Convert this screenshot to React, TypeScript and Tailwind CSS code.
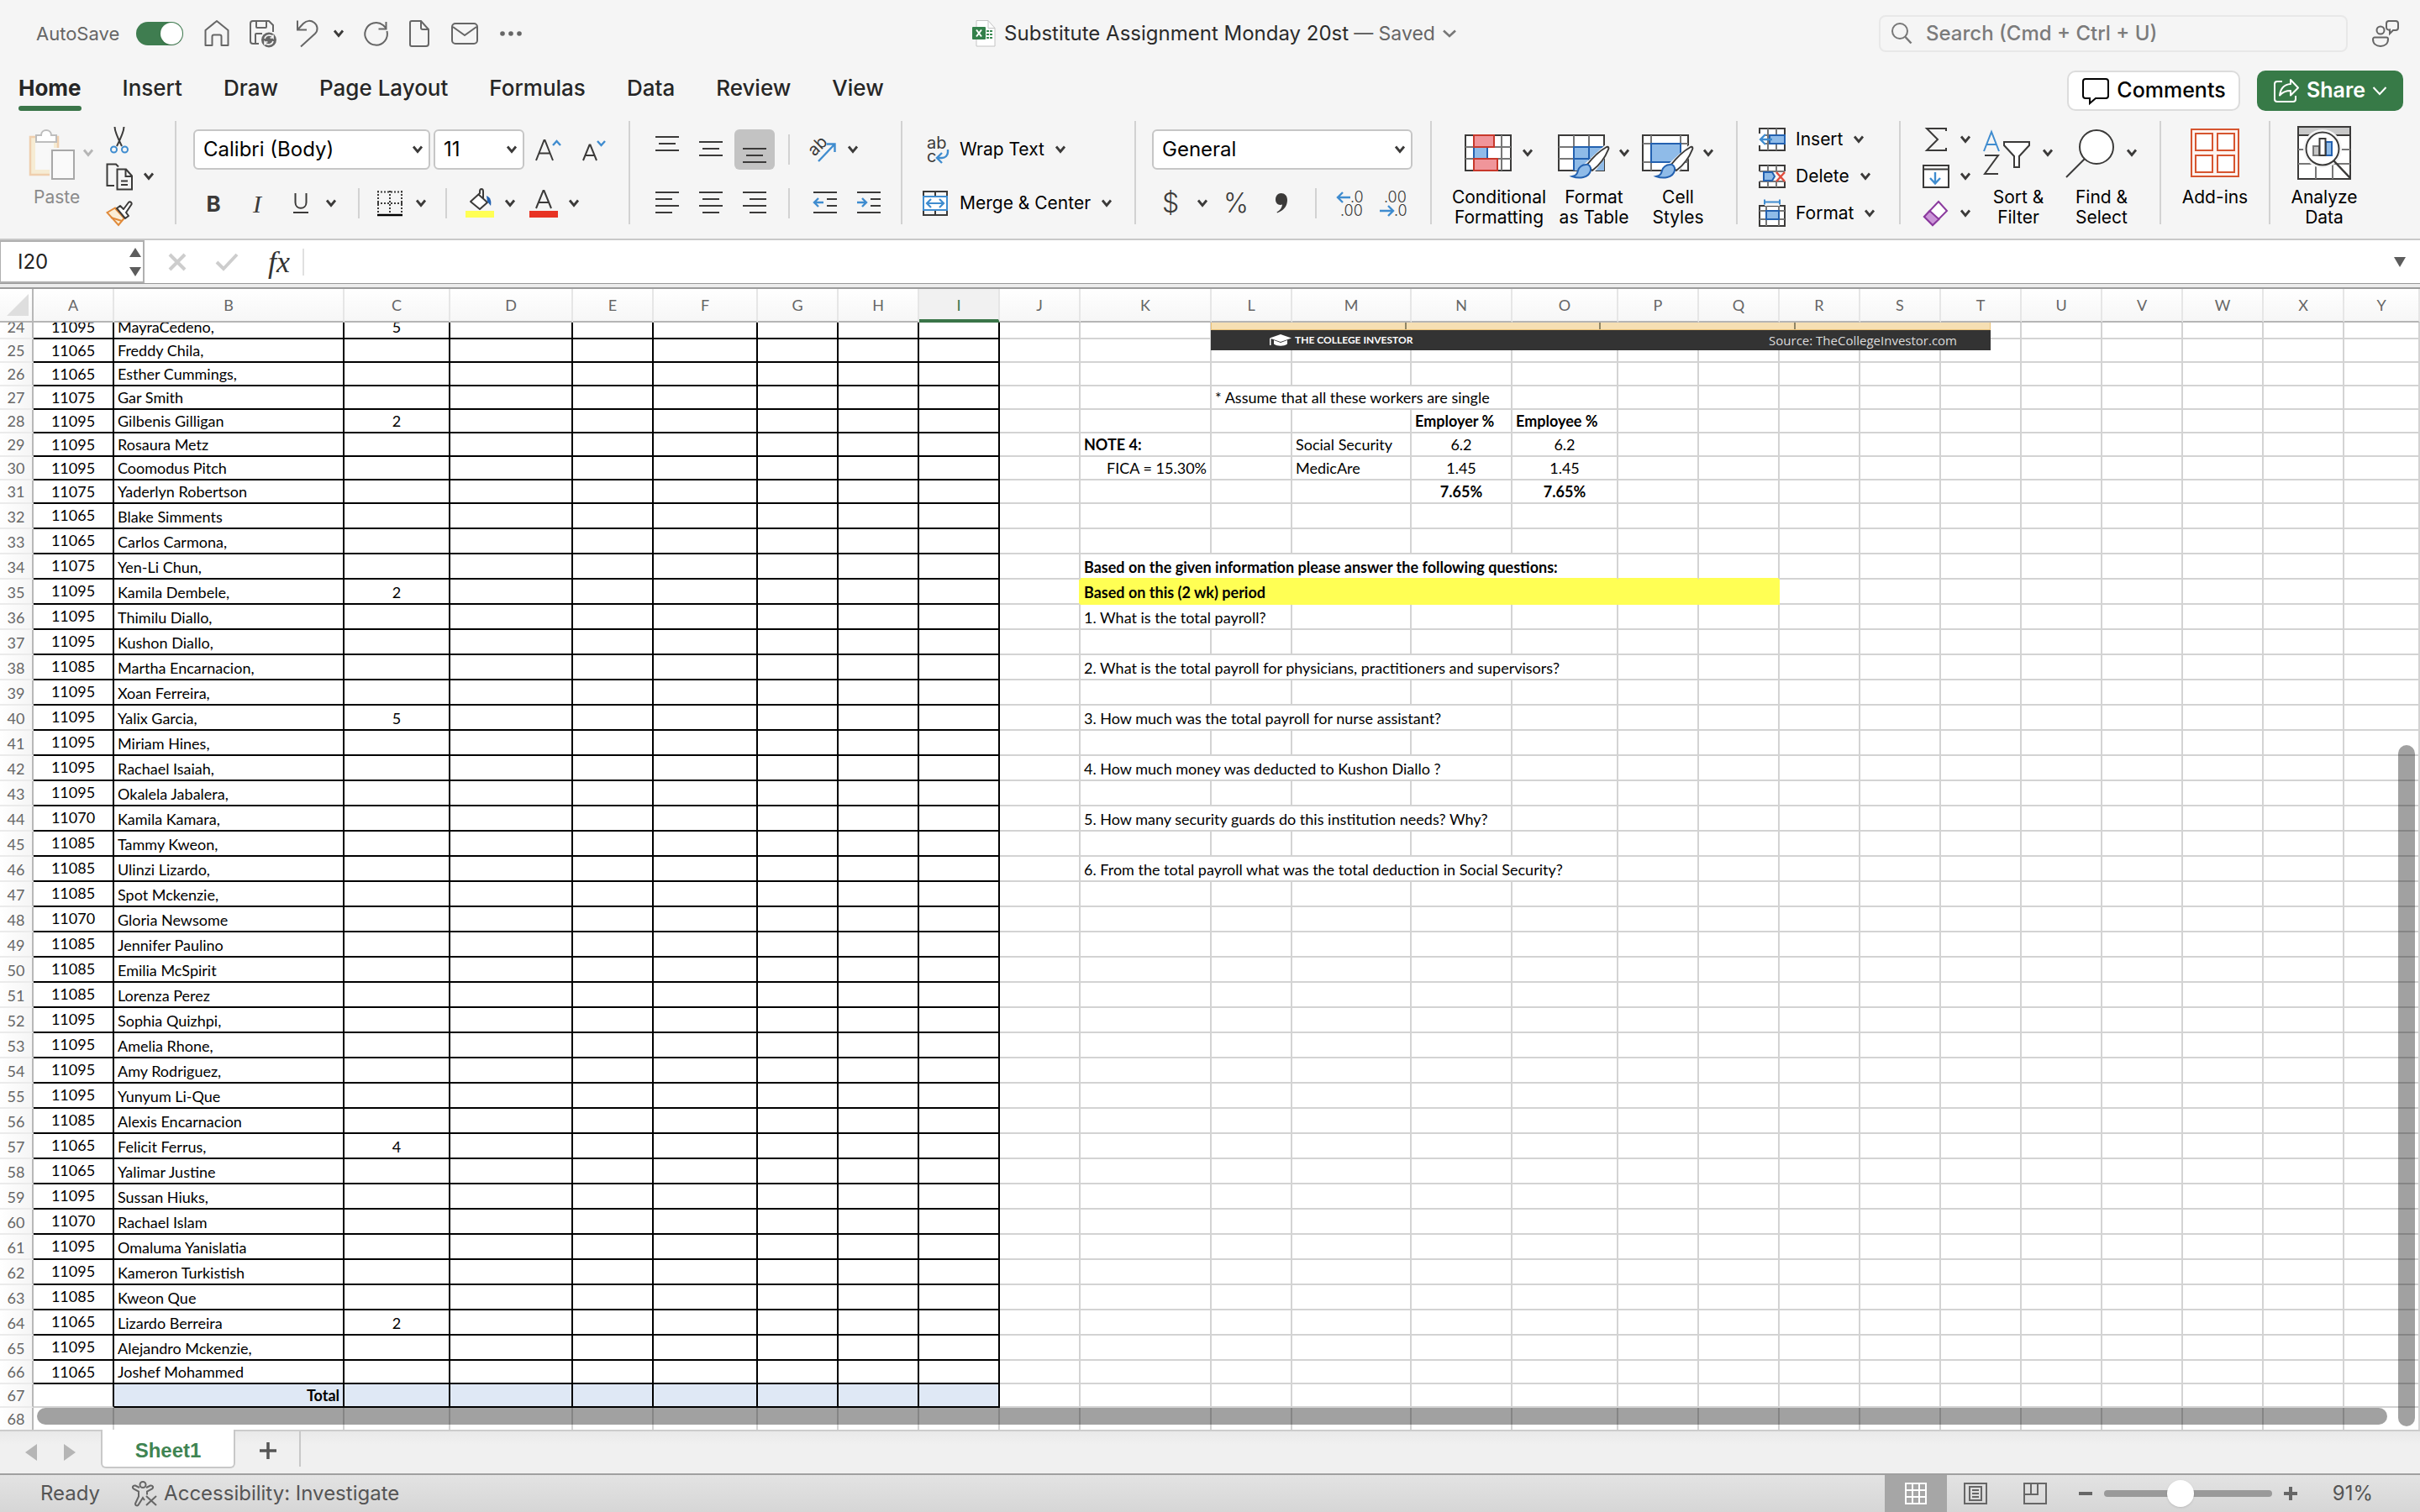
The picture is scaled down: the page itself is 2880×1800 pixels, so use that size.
import type { ReactNode } from 'react'
import clsx from 'clsx'

type Employee = { row: number; code: string; name: string; c?: string }
type Note = { col: string; span?: number; text: string; className?: string }

const COLUMNS = [
  { id: 'A', width: 96 },
  { id: 'B', width: 274 },
  { id: 'C', width: 126 },
  { id: 'D', width: 146 },
  { id: 'E', width: 96 },
  { id: 'F', width: 124 },
  { id: 'G', width: 96 },
  { id: 'H', width: 96 },
  { id: 'I', width: 96 },
  { id: 'J', width: 96 },
  { id: 'K', width: 156 },
  { id: 'L', width: 96 },
  { id: 'M', width: 142 },
  { id: 'N', width: 120 },
  { id: 'O', width: 126 },
  { id: 'P', width: 96 },
  { id: 'Q', width: 96 },
  { id: 'R', width: 96 },
  { id: 'S', width: 96 },
  { id: 'T', width: 96 },
  { id: 'U', width: 96 },
  { id: 'V', width: 96 },
  { id: 'W', width: 96 },
  { id: 'X', width: 96 },
  { id: 'Y', width: 0 },
]

const EMPLOYEES: Employee[] = [
  { row: 24, code: '11095', name: 'MayraCedeno,', c: '5' },
  { row: 25, code: '11065', name: 'Freddy Chila,' },
  { row: 26, code: '11065', name: 'Esther Cummings,' },
  { row: 27, code: '11075', name: 'Gar Smith' },
  { row: 28, code: '11095', name: 'Gilbenis Gilligan', c: '2' },
  { row: 29, code: '11095', name: 'Rosaura Metz' },
  { row: 30, code: '11095', name: 'Coomodus Pitch' },
  { row: 31, code: '11075', name: 'Yaderlyn Robertson' },
  { row: 32, code: '11065', name: 'Blake Simments' },
  { row: 33, code: '11065', name: 'Carlos Carmona,' },
  { row: 34, code: '11075', name: 'Yen-Li Chun,' },
  { row: 35, code: '11095', name: 'Kamila Dembele,', c: '2' },
  { row: 36, code: '11095', name: 'Thimilu Diallo,' },
  { row: 37, code: '11095', name: 'Kushon Diallo,' },
  { row: 38, code: '11085', name: 'Martha Encarnacion,' },
  { row: 39, code: '11095', name: 'Xoan Ferreira,' },
  { row: 40, code: '11095', name: 'Yalix Garcia,', c: '5' },
  { row: 41, code: '11095', name: 'Miriam Hines,' },
  { row: 42, code: '11095', name: 'Rachael Isaiah,' },
  { row: 43, code: '11095', name: 'Okalela Jabalera,' },
  { row: 44, code: '11070', name: 'Kamila Kamara,' },
  { row: 45, code: '11085', name: 'Tammy Kweon,' },
  { row: 46, code: '11085', name: 'Ulinzi Lizardo,' },
  { row: 47, code: '11085', name: 'Spot Mckenzie,' },
  { row: 48, code: '11070', name: 'Gloria Newsome' },
  { row: 49, code: '11085', name: 'Jennifer Paulino' },
  { row: 50, code: '11085', name: 'Emilia McSpirit' },
  { row: 51, code: '11085', name: 'Lorenza Perez' },
  { row: 52, code: '11095', name: 'Sophia Quizhpi,' },
  { row: 53, code: '11095', name: 'Amelia Rhone,' },
  { row: 54, code: '11095', name: 'Amy Rodriguez,' },
  { row: 55, code: '11095', name: 'Yunyum Li-Que' },
  { row: 56, code: '11085', name: 'Alexis Encarnacion' },
  { row: 57, code: '11065', name: 'Felicit Ferrus,', c: '4' },
  { row: 58, code: '11065', name: 'Yalimar Justine' },
  { row: 59, code: '11095', name: 'Sussan Hiuks,' },
  { row: 60, code: '11070', name: 'Rachael Islam' },
  { row: 61, code: '11095', name: 'Omaluma Yanislatia' },
  { row: 62, code: '11095', name: 'Kameron Turkistish' },
  { row: 63, code: '11085', name: 'Kweon Que' },
  { row: 64, code: '11065', name: 'Lizardo Berreira', c: '2' },
  { row: 65, code: '11095', name: 'Alejandro Mckenzie,' },
  { row: 66, code: '11065', name: 'Joshef Mohammed' },
]

const NOTES: Record<number, Note[]> = {
  27: [{ col: 'L', span: 3, text: '* Assume that all these workers are single' }],
  28: [
    { col: 'N', text: 'Employer %', className: 'font-bold' },
    { col: 'O', text: 'Employee %', className: 'font-bold' },
  ],
  29: [
    { col: 'K', text: 'NOTE 4:', className: 'font-bold' },
    { col: 'M', text: 'Social Security' },
    { col: 'N', text: '6.2', className: 'text-center' },
    { col: 'O', text: '6.2', className: 'text-center' },
  ],
  30: [
    { col: 'K', text: 'FICA = 15.30%', className: 'text-right' },
    { col: 'M', text: 'MedicAre' },
    { col: 'N', text: '1.45', className: 'text-center' },
    { col: 'O', text: '1.45', className: 'text-center' },
  ],
  31: [
    { col: 'N', text: '7.65%', className: 'text-center font-bold' },
    { col: 'O', text: '7.65%', className: 'text-center font-bold' },
  ],
  34: [{ col: 'K', span: 5, text: 'Based on the given information please answer the following questions:', className: 'font-bold' }],
  35: [{ col: 'K', span: 7, text: 'Based on this (2 wk) period', className: 'font-bold' }],
  36: [{ col: 'K', span: 2, text: '1. What is the total payroll?' }],
  38: [{ col: 'K', span: 5, text: '2. What is the total payroll for physicians, practitioners and supervisors?' }],
  40: [{ col: 'K', span: 4, text: '3. How much was the total payroll for nurse assistant?' }],
  42: [{ col: 'K', span: 4, text: '4. How much money was deducted to Kushon Diallo ?' }],
  44: [{ col: 'K', span: 4, text: '5. How many security guards do this institution needs? Why?' }],
  46: [{ col: 'K', span: 5, text: '6. From the total payroll what was the total deduction in Social Security?' }],
}

const DARK = '#3b3a39'
const BLUE = '#3f8ccf'
const NAVY = '#2361b0'
const SKY = '#8fbbe8'

function Icon({ w, h, children }: { w: number; h: number; children: ReactNode }) {
  return (
    <svg width={w} height={h} viewBox={`0 0 ${w} ${h}`} fill="none" stroke={DARK} strokeWidth={2} className="shrink-0 overflow-visible" aria-hidden="true">
      {children}
    </svg>
  )
}

function Chevron({ color = DARK }: { color?: string }) {
  return (
    <Icon w={14} h={10}>
      <path d="M2 1.5l5 6 5-6" stroke={color} strokeWidth={2.8} />
    </Icon>
  )
}

function Separator({ short = false }: { short?: boolean }) {
  return <span className={clsx('block w-[2px] shrink-0 bg-[#d2d2d2]', short ? 'h-9' : 'h-[123px]')} />
}

function ToolButton({ label, className, children }: { label: string; className?: string; children: ReactNode }) {
  return (
    <button type="button" aria-label={label} className={clsx('flex shrink-0 items-center justify-center self-stretch', className)}>
      {children}
    </button>
  )
}

function StackButton({ label, chevron = true, children }: { label: string; chevron?: boolean; children: ReactNode }) {
  return (
    <button type="button" aria-label={label} className="flex h-11 items-center gap-3">
      {children}
      {chevron && <Chevron />}
    </button>
  )
}

function BigButton({ lines, icon, chevron = true, className }: { lines: string[]; icon: ReactNode; chevron?: boolean; className: string }) {
  return (
    <button type="button" className={clsx('flex shrink-0 flex-col items-center pt-[6px] text-[21px] leading-6', className)}>
      <span className="mb-[9px] flex h-16 items-center gap-3">
        {icon}
        {chevron && <Chevron />}
      </span>
      {lines.map((line) => (
        <span key={line} className="whitespace-nowrap">{line}</span>
      ))}
    </button>
  )
}

function SelectBox({ label, value, className }: { label: string; value: string; className: string }) {
  return (
    <div className={clsx('relative h-12 shrink-0', className)}>
      <select
        aria-label={label}
        defaultValue={value}
        className="h-full w-full appearance-none rounded-md border-2 border-[#c6c6c6] bg-white px-[10px] text-2xl text-black"
      >
        <option>{value}</option>
      </select>
      <span className="pointer-events-none absolute inset-y-0 right-2 flex items-center">
        <Chevron />
      </span>
    </div>
  )
}

/* ---------- Title bar ---------- */

function TitleBar() {
  return (
    <header className="flex h-20 items-center pr-6 pl-[43px] text-[#666]">
      <div className="flex flex-1 items-center">
        <label className="flex items-center gap-5 text-[22px]">
          AutoSave
          <input type="checkbox" role="switch" defaultChecked className="peer sr-only" />
          <span className="flex h-7 w-14 items-center justify-end rounded-full bg-[#3f7d50] p-[1px]">
            <span className="h-[26px] w-[26px] rounded-full bg-white shadow" />
          </span>
        </label>
        <div className="ml-6 flex items-center">
          <button type="button" aria-label="Home">
            <Icon w={32} h={34}>
              <path d="M2.500 13L16 2l13.500 11v18h-8V20.500a2 2 0 0 0-2-2h-7a2 2 0 0 0-2 2V31h-8z" stroke="#666" strokeLinejoin="round" />
            </Icon>
          </button>
          <button type="button" aria-label="Save" className="ml-[22px]">
            <Icon w={34} h={34}>
              <g stroke="#666">
                <path d="M12 29H5a3 3 0 0 1-3-3V5a3 3 0 0 1 3-3h19l5 5v8" />
                <path d="M9 2v7a1 1 0 0 0 1 1h10a1 1 0 0 0 1-1V2M8 29V18a1 1 0 0 1 1-1h7" />
                <circle cx="24" cy="24.500" r="9" fill="#666" stroke="none" />
                <path d="M19 23a5.500 5.500 0 0 1 10-1.500v-3M29 26a5.500 5.500 0 0 1-10 1.500v3M25.500 22H29M19 27h3.500" stroke="#f5f5f5" strokeWidth={1.600} />
              </g>
            </Icon>
          </button>
          <button type="button" aria-label="Undo" className="ml-[22px] flex items-center gap-4">
            <Icon w={28} h={34}>
              <path d="M2 1.500V12.500h11M2.500 12L9 5c4-4 9-4 13-1s5 9 1 13L6 32.500" stroke="#666" />
            </Icon>
            <Chevron />
          </button>
          <button type="button" aria-label="Redo" className="ml-[22px]">
            <Icon w={32} h={32}>
              <path d="M28.500 13A13.300 13.300 0 1 1 24 6l4 4M27.500 2v8.500h-9" stroke="#666" />
            </Icon>
          </button>
          <button type="button" aria-label="New" className="ml-[22px]">
            <Icon w={26} h={34}>
              <path d="M4 2h11l9 10v17a3 3 0 0 1-3 3H4a2 2 0 0 1-2-2V4a2 2 0 0 1 2-2zM15 2v8a2 2 0 0 0 2 2h7" stroke="#666" />
            </Icon>
          </button>
          <button type="button" aria-label="Mail" className="ml-6">
            <Icon w={34} h={28}>
              <rect x="2" y="2" width="30" height="24" rx="4" stroke="#666" />
              <path d="M3 6l14 10L31 6" stroke="#666" />
            </Icon>
          </button>
          <button type="button" aria-label="More" className="ml-6">
            <Icon w={28} h={8}>
              <g fill="#666" stroke="none">
                <circle cx="4" cy="4" r="2.800" />
                <circle cx="14" cy="4" r="2.800" />
                <circle cx="24" cy="4" r="2.800" />
              </g>
            </Icon>
          </button>
        </div>
      </div>

      <h1 className="flex items-center pr-2 text-2xl whitespace-nowrap">
        <Icon w={28} h={34}>
          <path d="M5 1.500h14l8 9V32H5z" fill="#fff" stroke="#c4c4c4" strokeWidth={1} />
          <path d="M19 1.500v9h8" stroke="#c4c4c4" strokeWidth={1} />
          <path d="M17 13h3v2h-3zm4 0h3v2h-3zm-4 4h3v2h-3zm4 0h3v2h-3zm-4 4h3v2h-3zm4 0h3v2h-3z" fill="#3a8a52" stroke="none" />
          <rect x="0" y="9" width="16" height="15" rx="1" fill="#33804a" stroke="none" />
          <path d="M5 12.500l6 8M11 12.500l-6 8" stroke="#fff" />
        </Icon>
        <span className="ml-[10px] text-[#2b2b2b]">Substitute Assignment Monday 20st</span>
        <span className="mr-2 ml-[6px] text-[23px]">— Saved</span>
        <Icon w={18} h={12}>
          <path d="M2 2.500l7 6.500 7-6.500" stroke="#777" strokeWidth={2.600} />
        </Icon>
      </h1>

      <div className="flex flex-1 items-center justify-end gap-7">
        <label className="flex h-11 w-[558px] items-center gap-4 rounded-lg border-2 border-[#e8e8e8] px-3">
          <Icon w={26} h={28}>
            <circle cx="11" cy="11" r="9" stroke="#777" />
            <path d="M17.500 18l7 7.500" stroke="#777" strokeWidth={2.500} />
          </Icon>
          <input
            aria-label="Search"
            placeholder="Search (Cmd + Ctrl + U)"
            className="min-w-0 flex-1 bg-transparent text-2xl font-medium placeholder:text-[#7b7b7b]"
          />
        </label>
        <button type="button" aria-label="Presence">
          <Icon w={34} h={34}>
            <g stroke="#666">
              <circle cx="11" cy="13" r="4.500" />
              <path d="M4 21.500h14a2 2 0 0 1 2 2C20 29 16 32 11 32S2 29 2 23.500a2 2 0 0 1 2-2z" />
              <path d="M20 2h9a3 3 0 0 1 3 3v5a3 3 0 0 1-3 3h-3l-4 4v-4.500a3 3 0 0 1-4-3V5a3 3 0 0 1 3-3z" />
            </g>
          </Icon>
        </button>
      </div>
    </header>
  )
}

function TabRow() {
  const tabs = ['Insert', 'Draw', 'Page Layout', 'Formulas', 'Data', 'Review', 'View']
  return (
    <div className="flex h-14 items-center justify-between pr-5 pl-[22px]">
      <nav className="flex h-full items-start gap-[49px] text-[26px] leading-[50px] font-medium text-[#262626]">
        <a href="#home" className="font-bold">
          Home
          <span className="-mt-1 block h-[6px] rounded-full bg-[#3a7548]" />
        </a>
        {tabs.map((tab) => (
          <a key={tab} href={`#${tab}`} className="whitespace-nowrap">{tab}</a>
        ))}
      </nav>
      <div className="flex gap-5 text-[25px] font-medium">
        <button type="button" className="flex h-12 w-[206px] items-center justify-center gap-2 rounded-[10px] border-2 border-[#dcdcdc] bg-white text-black">
          <Icon w={34} h={32}>
            <path d="M5 2h24a3 3 0 0 1 3 3v17a3 3 0 0 1-3 3H17l-7 6v-6H5a3 3 0 0 1-3-3V5a3 3 0 0 1 3-3z" stroke="#000" />
          </Icon>
          Comments
        </button>
        <button type="button" className="flex h-12 w-[174px] items-center justify-center gap-2 rounded-[10px] bg-[#377a47] text-white">
          <Icon w={32} h={30}>
            <g stroke="#fff" strokeLinejoin="round">
              <path d="M11 4H5a3 3 0 0 0-3 3v18a3 3 0 0 0 3 3h19a3 3 0 0 0 3-3v-4" />
              <path d="M21 2l9 9.500-9 9v-5.500c-6 0-10 2-13 5.500 1-8 5-13 13-13.500z" />
            </g>
          </Icon>
          <span className="font-semibold">Share</span>
          <Icon w={18} h={12}>
            <path d="M1.500 2L9 10l7.500-8" stroke="#fff" />
          </Icon>
        </button>
      </div>
    </div>
  )
}

/* ---------- Ribbon ---------- */

function ClipboardGroup() {
  return (
    <div className="flex w-[208px] shrink-0 pl-[34px]">
      <button type="button" className="flex w-[78px] shrink-0 flex-col items-start pt-[6px] text-[21px] leading-6 text-[#8a8a8a]">
        <span className="mb-[9px] flex h-16 items-center gap-2">
          <Icon w={56} h={64}>
            <path d="M3 13h32v44H3z" fill="#f6ecd4" stroke="none" />
            <path d="M8 18h22v34H8z" fill="#f8f8f8" stroke="none" />
            <path d="M11 13H2v45h23M29 13h6v13" stroke="#efcfae" strokeWidth={2.500} />
            <path d="M25 26h12v36H25z" fill="#f5f5f5" stroke="none" />
            <path d="M9 11h6c0-8 12-8 12 0h6v8H9z" fill="#fff" stroke="#bdbdbd" />
            <rect x="28" y="29" width="26" height="34" fill="#fafafa" stroke="#a8a8a8" />
          </Icon>
          <Chevron color="#b5b5b5" />
        </span>
        <span className="pl-[6px]">Paste</span>
      </button>
      <div className="ml-[14px] flex flex-col items-start">
        <StackButton label="Cut" chevron={false}>
          <Icon w={32} h={34}>
            <path d="M10.500 2c0 5 3 12 8.500 23M21.500 2c0 5-3 12-8.500 23" />
            <circle cx="9.500" cy="29" r="3.500" stroke={BLUE} />
            <circle cx="22.500" cy="29" r="3.500" stroke={BLUE} />
          </Icon>
        </StackButton>
        <StackButton label="Copy">
          <Icon w={32} h={34}>
            <path d="M10 28H1.500V2.500H12l3 3" />
            <path d="M13.500 8.500H24l7 8v16H13.500zM23.500 9v8h7M18 22.500h8M18 27h8" />
          </Icon>
        </StackButton>
        <StackButton label="Format painter" chevron={false}>
          <Icon w={32} h={32}>
            <path d="M1.500 15L11 9.500l11 12L15 30z" fill="#fbeed6" stroke="#e08a3a" />
            <path d="M6 21l13 4M11 10l11 12" stroke="#e08a3a" />
            <path d="M13 10l4-3 4 4 6-8c2-2 5 1 3 3l-6 9 3 4-4 3z" fill="#fff" strokeLinejoin="round" />
          </Icon>
        </StackButton>
      </div>
    </div>
  )
}

function FontGroup() {
  return (
    <div className="flex w-[538px] shrink-0 flex-col gap-[22px] pt-[10px] pl-5">
      <div className="flex h-12 items-center gap-1">
        <SelectBox label="Font" value="Calibri (Body)" className="w-[282px]" />
        <SelectBox label="Font size" value="11" className="w-[108px]" />
        <ToolButton label="Increase font size" className="ml-2 w-8">
          <Icon w={32} h={34}>
            <path d="M2 30L11.500 6h1L22 30M5.500 21.500h13" />
            <path d="M22 12l4.500-5 4.500 5" stroke={BLUE} strokeWidth={2.400} />
          </Icon>
        </ToolButton>
        <ToolButton label="Decrease font size" className="ml-5 w-8">
          <Icon w={32} h={34}>
            <path d="M2 30L9.500 11.500h1L18 30M5 24h10" />
            <path d="M19 7l4.500 5L28 7" stroke={BLUE} strokeWidth={2.400} />
          </Icon>
        </ToolButton>
      </div>
      <div className="flex h-9 items-center text-[26px] text-[#3b3a39]">
        <ToolButton label="Bold" className="w-12 font-bold">B</ToolButton>
        <ToolButton label="Italic" className="w-14 [font-family:'Liberation_Serif',serif] text-[30px] italic">I</ToolButton>
        <ToolButton label="Underline" className="w-12">
          <Icon w={18} h={28}>
            <path d="M2.500 2v11c0 9 13 9 13 0V2M0 25h18" />
          </Icon>
        </ToolButton>
        <ToolButton label="Underline options" className="w-6"><Chevron /></ToolButton>
        <div className="mx-5"><Separator short /></div>
        <ToolButton label="Borders" className="gap-[14px]">
          <Icon w={32} h={32}>
            <path d="M1 2.500h30M1 16h30M2 1v27M16 1v27M30 1v27" strokeDasharray="2 2" />
            <path d="M1 30h30" stroke="#000" strokeWidth={2.500} />
          </Icon>
          <Chevron />
        </ToolButton>
        <div className="mx-[22px]"><Separator short /></div>
        <ToolButton label="Fill color" className="gap-3">
          <Icon w={34} h={34}>
            <path d="M15 7l11 10-9 8-11-9 11-10V4c0-4 4-4 4 0v9" transform="translate(0 -1)" strokeLinejoin="round" fill="#fff" />
            <path d="M25 8c5 2 6 7 5 12l-4-5z" fill={NAVY} stroke="none" />
            <path d="M0 26h34v8H0z" fill="#ffff54" stroke="none" />
          </Icon>
          <Chevron />
        </ToolButton>
        <ToolButton label="Font color" className="ml-4 gap-3">
          <Icon w={34} h={34}>
            <path d="M8 23L16.500 2h1L26 23M11 16h12" />
            <path d="M0 26h34v8H0z" fill="#e83323" stroke="none" />
          </Icon>
          <Chevron />
        </ToolButton>
      </div>
    </div>
  )
}

function AlignmentGroup() {
  return (
    <div className="flex w-[322px] shrink-0 flex-col gap-[22px] pt-[10px] pl-[18px]">
      <div className="flex h-12 items-center">
        <ToolButton label="Top align" className="w-[52px]">
          <Icon w={28} h={48}><path d="M0 9h28M4 17h20M0 25h28" /></Icon>
        </ToolButton>
        <ToolButton label="Middle align" className="w-[52px]">
          <Icon w={28} h={48}><path d="M0 15h28M4 23h20M0 31h28" /></Icon>
        </ToolButton>
        <ToolButton label="Bottom align" className="ml-[2px] w-12 rounded-md bg-[#c3c3c3]">
          <Icon w={28} h={48}><path d="M0 23h28M4 31h20M0 39h28" /></Icon>
        </ToolButton>
        <div className="mr-[22px] ml-4"><Separator short /></div>
        <ToolButton label="Orientation" className="gap-3">
          <Icon w={34} h={34}>
            <text x="2" y="23" transform="rotate(-45 8 18)" fill={DARK} stroke="none" fontSize="20">ab</text>
            <path d="M12 31L31 11M22 10.500h9.500V20" stroke={BLUE} strokeWidth={2.400} />
          </Icon>
          <Chevron />
        </ToolButton>
      </div>
      <div className="flex h-9 items-center">
        <ToolButton label="Align left" className="w-[52px]">
          <Icon w={28} h={36}><path d="M0 5h28M0 13h20M0 21h28M0 29h20" /></Icon>
        </ToolButton>
        <ToolButton label="Center" className="w-[52px]">
          <Icon w={28} h={36}><path d="M0 5h28M4 13h20M0 21h28M4 29h20" /></Icon>
        </ToolButton>
        <ToolButton label="Align right" className="w-[52px]">
          <Icon w={28} h={36}><path d="M0 5h28M8 13h20M0 21h28M8 29h20" /></Icon>
        </ToolButton>
        <div className="mr-3 ml-[14px]"><Separator short /></div>
        <ToolButton label="Decrease indent" className="ml-1 w-[52px]">
          <Icon w={28} h={36}>
            <path d="M0 5h28M16 13h12M16 21h12M0 29h28" />
            <path d="M12 17H2M6 12l-5 5 5 5" stroke={BLUE} strokeWidth={2.400} />
          </Icon>
        </ToolButton>
        <ToolButton label="Increase indent" className="w-[52px]">
          <Icon w={28} h={36}>
            <path d="M0 5h28M16 13h12M16 21h12M0 29h28" />
            <path d="M0 17h10M6 12l5 5-5 5" stroke={BLUE} strokeWidth={2.400} />
          </Icon>
        </ToolButton>
      </div>
    </div>
  )
}

function WrapGroup() {
  return (
    <div className="flex w-[276px] shrink-0 flex-col gap-[22px] pt-[10px] pl-6 text-[21px]">
      <button type="button" className="flex h-12 items-center gap-3 whitespace-nowrap">
        <Icon w={32} h={36}>
          <text x="5" y="17" fill={DARK} stroke="none" fontSize="20">ab</text>
          <text x="5" y="33" fill={DARK} stroke="none" fontSize="20">c</text>
          <path d="M30 18v3c0 4-3 7-7 7h-5M23 22l-6 6 6 6" stroke={BLUE} strokeWidth={2.400} />
        </Icon>
        Wrap Text
        <Chevron />
      </button>
      <button type="button" className="flex h-9 items-center gap-3 whitespace-nowrap">
        <Icon w={32} h={32}>
          <path d="M1 2h28v28H1zM15 2v6M15 24v6" />
          <path d="M1 8h28v16H1z" fill="#fff" stroke={BLUE} />
          <path d="M6 16h18M10 11l-5 5 5 5M20 11l5 5-5 5" stroke={BLUE} strokeWidth={2.200} />
        </Icon>
        Merge &amp; Center
        <Chevron />
      </button>
    </div>
  )
}

function NumberGroup() {
  return (
    <div className="flex w-[350px] shrink-0 flex-col gap-[22px] pt-[10px] pl-[19px]">
      <SelectBox label="Number format" value="General" className="w-[310px]" />
      <div className="flex h-9 items-center text-[32px] font-light text-[#3b3a39]">
        <ToolButton label="Accounting format" className="w-11">$</ToolButton>
        <ToolButton label="Accounting options" className="w-8"><Chevron /></ToolButton>
        <ToolButton label="Percent style" className="w-12">%</ToolButton>
        <ToolButton label="Comma style" className="ml-[14px] w-8">
          <Icon w={16} h={28}>
            <path d="M7.500 2C12 2 15 5 15 10c0 8-5 13-12 15.500l-.5-1c4-2 6-5 6.500-9-4 1.500-8-1-8-6C1 5 4 2 7.500 2z" fill={DARK} stroke="none" />
          </Icon>
        </ToolButton>
        <div className="mx-6"><Separator short /></div>
        <ToolButton label="Increase decimal" className="w-8 text-lg">
          <Icon w={34} h={34}>
            <text x="17" y="16" fill={DARK} stroke="none" fontSize="18">.0</text>
            <text x="5" y="32" fill={DARK} stroke="none" fontSize="18">.00</text>
            <path d="M17 10H2M8 4l-6 6 6 6" stroke={BLUE} strokeWidth={2.400} />
          </Icon>
        </ToolButton>
        <ToolButton label="Decrease decimal" className="ml-5 w-8 text-lg">
          <Icon w={34} h={34}>
            <text x="5" y="16" fill={DARK} stroke="none" fontSize="18">.00</text>
            <text x="17" y="32" fill={DARK} stroke="none" fontSize="18">.0</text>
            <path d="M0 26h16M10 20l6 6-6 6" stroke={BLUE} strokeWidth={2.400} />
          </Icon>
        </ToolButton>
      </div>
    </div>
  )
}

function BrushOverlay() {
  return (
    <>
      <path d="M58 25c2-1 3 1 2 3L42 52l-8-5z" fill="#fff" stroke="#f5f5f5" strokeWidth={6} />
      <path d="M58 25c2-1 3 1 2 3C56 38 49 47 41 53l-7-6C41 38 49 30 58 25z" fill="#fff" />
      <path d="M33 46c4-1 7 3 6 7-2 9-14 10-22 7 5-1 6-3 7-7 1-4 5-7 9-7z" fill={SKY} stroke={NAVY} />
    </>
  )
}

function StylesGroup() {
  return (
    <div className="flex w-[362px] shrink-0 pl-5">
      <BigButton
        className="w-[120px]"
        lines={['Conditional', 'Formatting']}
        icon={
          <Icon w={56} h={64}>
            <path d="M1 11h54v42H1z" fill="#fff" />
            <path d="M1 25h54M1 39h54M11 11v42M44 11v42" stroke="#777" />
            <path d="M11 25h16v14H11z" fill={SKY} stroke={NAVY} />
            <path d="M11 11h24v14H11zM11 39h28v14H11z" fill="#f0959a" stroke="#c8382b" />
          </Icon>
        }
      />
      <BigButton
        className="w-[106px]"
        lines={['Format', 'as Table']}
        icon={
          <Icon w={60} h={64}>
            <path d="M1 11h54v42H1z" fill="#fff" />
            <path d="M1 25h54M1 39h54M19 11v42M37 11v42" stroke="#777" />
            <path d="M19 25h36v28H19z" fill={SKY} stroke="none" />
            <path d="M55 25H19v28M37 25v28M19 39h36" stroke={NAVY} />
            <BrushOverlay />
          </Icon>
        }
      />
      <BigButton
        className="w-[94px]"
        lines={['Cell', 'Styles']}
        icon={
          <Icon w={60} h={64}>
            <path d="M1 11h54v42H1z" fill="#fff" />
            <path d="M1 21h54M1 43h54M11 11v42M46 11v42" stroke="#777" />
            <path d="M11 21h35v22H11z" fill={SKY} stroke={NAVY} />
            <BrushOverlay />
          </Icon>
        }
      />
    </div>
  )
}

function CellsGroup() {
  return (
    <div className="flex w-[192px] shrink-0 flex-col items-start pl-[25px] text-[21px]">
      <button type="button" className="flex h-11 items-center gap-3">
        <Icon w={32} h={30}>
          <path d="M1 2h30v26H1z" fill="#fff" />
          <path d="M1 10h30M1 20h30M11 2v26M21 2v26" stroke="#777" />
          <path d="M13 10h18v10H13z" fill={SKY} stroke={NAVY} />
          <path d="M0 8h8v14H0z" fill="#fff" stroke="none" />
          <path d="M16 15H2M8 9l-6 6 6 6" stroke={BLUE} strokeWidth={2.400} />
        </Icon>
        Insert
        <Chevron />
      </button>
      <button type="button" className="flex h-11 items-center gap-3">
        <Icon w={32} h={30}>
          <path d="M1 9V2h30v7M1 21v7h30v-7" fill="#fff" />
          <path d="M1 9h30M1 21h30M11 2v7M21 2v7M11 21v7M21 21v7" stroke="#777" />
          <path d="M6 10h10l3 5-3 5H6z" fill={SKY} stroke={NAVY} />
          <path d="M21 10l10 11M31 10L21 21" stroke="#e04b3c" strokeWidth={2.400} />
        </Icon>
        Delete
        <Chevron />
      </button>
      <button type="button" className="flex h-11 items-center gap-3">
        <Icon w={32} h={34}>
          <path d="M1 8h30v24H1z" fill="#fff" />
          <path d="M1 14h30M1 24h30M9 8v24M24 8v24" stroke="#777" />
          <path d="M9 14h15v10H9z" fill={SKY} stroke={NAVY} />
          <path d="M7 0h18v8H7z" fill="#f5f5f5" stroke="none" />
          <path d="M7 3.500h18M7 .5v6M25 .5v6" stroke={BLUE} />
        </Icon>
        Format
        <Chevron />
      </button>
    </div>
  )
}

function EditingGroup() {
  return (
    <div className="flex w-[308px] shrink-0 pl-[26px]">
      <div className="flex w-[66px] shrink-0 flex-col items-start">
        <StackButton label="AutoSum">
          <Icon w={32} h={30}>
            <path d="M28 5V2H5l13 13L5 28h23v-3" />
          </Icon>
        </StackButton>
        <StackButton label="Fill">
          <Icon w={32} h={30}>
            <path d="M1 2h30v26H1zM1 6.500h30" fill="#fff" />
            <path d="M15 10v13M9 17l6 6.500 6-6.500" stroke={BLUE} strokeWidth={2.400} />
          </Icon>
        </StackButton>
        <StackButton label="Clear">
          <Icon w={32} h={32}>
            <path d="M19 2l10 11-17 17L2 20z" fill="#fff" stroke="#8b3a9e" />
            <path d="M8.500 13l11 10-7.500 7L2 20z" fill="#cb95d8" stroke="#8b3a9e" />
          </Icon>
        </StackButton>
      </div>
      <BigButton
        className="w-[96px]"
        lines={['Sort &', 'Filter']}
        icon={
          <Icon w={58} h={64}>
            <path d="M1 30L10 7l9 23M4 22h12" stroke={BLUE} />
            <path d="M2 35h16L2 57h16" />
            <path d="M25 19h30v4L43 36v13h-6V36L25 23z" fill="#fff" />
          </Icon>
        }
      />
      <BigButton
        className="w-[102px]"
        lines={['Find &', 'Select']}
        icon={
          <Icon w={60} h={64}>
            <circle cx="37" cy="25" r="20" fill="#fff" />
            <path d="M23 39L1 61" />
          </Icon>
        }
      />
    </div>
  )
}

function Ribbon() {
  return (
    <div className="flex h-[150px] items-start overflow-hidden border-b-2 border-[#c8c8c8] pt-2 text-black">
      <ClipboardGroup />
      <Separator />
      <FontGroup />
      <Separator />
      <AlignmentGroup />
      <Separator />
      <WrapGroup />
      <Separator />
      <NumberGroup />
      <Separator />
      <StylesGroup />
      <Separator />
      <CellsGroup />
      <Separator />
      <EditingGroup />
      <Separator />
      <BigButton
        className="w-[128px]"
        lines={['Add-ins']}
        chevron={false}
        icon={
          <Icon w={60} h={64}>
            <g stroke="#d6552f">
              <rect x="2" y="4" width="56" height="56" fill="#fdf3ef" />
              <path d="M7 9h20v20H7zM33 9h20v20H33zM7 35h20v20H7zM33 35h20v20H33z" fill="#fff" />
            </g>
          </Icon>
        }
      />
      <Separator />
      <BigButton
        className="w-[128px]"
        lines={['Analyze', 'Data']}
        chevron={false}
        icon={
          <Icon w={64} h={64}>
            <path d="M1 1h62v62H1z" fill="#fff" />
            <path d="M2 2h60v9H2z" fill="#c8c8c8" stroke="none" />
            <path d="M1 11h62" />
            <path d="M1 28h62M1 45h62M22 45v18M42 45v18" stroke="#777" />
            <circle cx="30" cy="27" r="22" fill="#fff" stroke="#f5f5f5" />
            <circle cx="30" cy="27" r="19.500" fill="#fff" />
            <path d="M19 24h7v11h-7z" fill="#c8c8c8" stroke="#777" />
            <path d="M34 19h7v16h-7z" fill={SKY} stroke={NAVY} />
            <path d="M26.500 15h7v20h-7z" fill="#fff" />
            <path d="M43 41l20 21" strokeWidth={2.500} />
          </Icon>
        }
      />
    </div>
  )
}

function FormulaBar() {
  return (
    <div className="flex h-[58px] flex-col bg-white">
      <div className="flex h-[52px] items-center border-b border-[#999]">
        <div className="flex h-full w-[172px] items-center border-2 border-l-[1px] border-[#b0b0b0]">
          <input aria-label="Name box" defaultValue="I20" className="min-w-0 flex-1 pl-5 text-2xl text-[#222]" />
          <button type="button" aria-label="Resize name box" className="pr-[2px]">
            <Icon w={14} h={36}>
              <path d="M7 1l7 11H0zM7 35l7-11H0z" fill="#5c5c5c" stroke="none" />
            </Icon>
          </button>
        </div>
        <button type="button" aria-label="Cancel" className="ml-7">
          <Icon w={22} h={22}><path d="M2 2l18 18M20 2L2 20" stroke="#cdcdcd" strokeWidth={4} /></Icon>
        </button>
        <button type="button" aria-label="Enter" className="ml-[34px]">
          <Icon w={28} h={22}><path d="M2 11l8 8L26 2" stroke="#cdcdcd" strokeWidth={4} /></Icon>
        </button>
        <button type="button" className="ml-8 w-[32px] [font-family:'Liberation_Serif',serif] text-4xl text-[#333] italic">fx</button>
        <div className="ml-3 h-8 w-[2px] bg-[#e0e0e0]" />
        <input aria-label="Formula" className="h-full min-w-0 flex-1 px-3 text-2xl" />
        <button type="button" aria-label="Expand formula bar" className="mr-[17px]">
          <Icon w={14} h={12}><path d="M0 0h14L7 12z" fill="#5c5c5c" stroke="none" /></Icon>
        </button>
      </div>
      <div className="h-1 bg-[#ececec]" />
      <div className="h-[2px] bg-[#9c9c9c]" />
    </div>
  )
}

/* ---------- Sheet ---------- */

function borderFor(row: number, index: number) {
  // The payroll block A24:I67 carries solid black borders
  const right = index <= 8 && row <= 67 ? 'border-r-black' : row === 35 && index >= 9 && index <= 16 ? 'border-r-[#ffff54]' : 'border-r-[#d3d3d3]'
  const bottom =
    (index <= 8 && row <= 66) || (index >= 1 && index <= 8 && row === 67)
      ? 'border-b-black'
      : (row === 34 || row === 35) && index >= 10 && index <= 16
        ? 'border-b-[#ffff54]'
        : 'border-b-[#d3d3d3]'
  return clsx(right, bottom, row === 68 ? 'border-r-2' : 'border-r-2 border-b-2')
}

function SheetRow({ row }: { row: number }) {
  const employee = EMPLOYEES.find((e) => e.row === row)
  const notes = NOTES[row] ?? []
  const tall = row >= 32 && row <= 65
  const height = row === 24 ? 'h-5' : tall ? 'h-[30px]' : row === 68 ? 'h-[26px]' : 'h-7'
  const inner = clsx('flex flex-col justify-end overflow-hidden whitespace-nowrap', row === 24 ? 'h-[18px]' : tall ? 'h-7' : 'h-[26px]')

  const cells: ReactNode[] = []
  for (let i = 0; i < COLUMNS.length; i++) {
    const id = COLUMNS[i].id
    const note = notes.find((n) => n.col === id)
    const span = note?.span ?? 1
    const last = i + span - 1
    let text = note?.text ?? ''
    let align = note?.className ?? ''
    if (employee && id === 'A') {
      text = employee.code
      align = 'text-center'
    } else if (employee && id === 'B') {
      text = employee.name
    } else if (employee?.c && id === 'C') {
      text = employee.c
      align = 'text-center'
    } else if (row === 67 && id === 'B') {
      text = 'Total'
      align = 'text-right font-bold'
    }
    const total = row === 67 && i >= 1 && i <= 8
    const highlight = row === 35 && id === 'K'
    cells.push(
      <td key={id} colSpan={span} className={clsx('p-0', borderFor(row, last), total && 'bg-[#dfe8f5]', highlight && 'bg-[#ffff54]')}>
        {text && (
          <div className={clsx(inner, 'px-1', align, id === 'A' && tall && 'justify-start')}>
            <span className="leading-[26px]">{text}</span>
          </div>
        )}
      </td>,
    )
    i = last
  }

  return (
    <tr className={height}>
      <th
        scope="row"
        className={clsx(
          'border-r-2 border-r-[#b8b8b8] border-b-[#ebebeb] bg-linear-to-r from-white to-[#f5f5f5] p-0 font-normal text-[#666]',
          row !== 68 && 'border-b-2',
        )}
      >
        <div className={inner}>
          <span className="leading-[26px]">{row}</span>
        </div>
      </th>
      {cells}
    </tr>
  )
}

function EmbeddedImage() {
  return (
    <div className="absolute top-10 left-[1441px] w-[928px]">
      <div className="grid h-[9px] grid-cols-4 divide-x-2 divide-[#8f8565] border-x border-b border-[#e8c078] bg-[#f6dfb3]">
        <span />
        <span />
        <span />
        <span />
      </div>
      <div className="flex h-6 items-center justify-between bg-[#333] pr-10 pl-[70px] text-white">
        <span className="flex items-center gap-1 text-xs leading-6 font-bold [font-family:Lato,sans-serif]">
          <svg width="26" height="14" viewBox="0 0 26 14" fill="#fff" aria-hidden="true">
            <path d="M13 0l13 4.500L13 9 0 4.500zM5 7l8 3 8-3v4.500c-4 3-12 3-16 0zM0 5h1.500v8H0z" />
          </svg>
          THE COLLEGE INVESTOR
        </span>
        <span className="text-[15px] leading-6 text-[#dcdcdc] [font-family:'Open_Sans',sans-serif]">Source: TheCollegeInvestor.com</span>
      </div>
    </div>
  )
}

function Sheet() {
  const rows = Array.from({ length: 45 }, (_, i) => i + 24)
  return (
    <main className="relative flex-1 overflow-hidden border-b-2 border-[#cccccc] bg-white">
      <table className="w-full table-fixed border-separate border-spacing-0 text-[18px] text-black [font-family:Lato,Carlito,sans-serif]">
        <colgroup>
          <col className="w-10" />
          {COLUMNS.map((col) => (
            <col key={col.id} style={col.width ? { width: col.width } : undefined} />
          ))}
        </colgroup>
        <thead>
          <tr className="h-10 bg-linear-to-b from-white to-[#f6f6f6] text-[#666]">
            <th className="border-r-2 border-b-2 border-r-[#b8b8b8] border-b-[#b5b5b5] p-0">
              <button type="button" aria-label="Select all" className="flex w-full justify-end pr-1">
                <Icon w={26} h={26}><path d="M26 0v26H0z" fill="#dedede" stroke="none" /></Icon>
              </button>
            </th>
            {COLUMNS.map((col) => (
              <th
                key={col.id}
                scope="col"
                className={clsx(
                  'border-r-2 border-r-[#e6e6e6] p-0 font-normal',
                  col.id === 'I' ? 'border-b-4 border-b-[#3a7548] bg-[#f1f1f1] pt-[2px] text-[#3a7548]' : 'border-b-2 border-b-[#b5b5b5]',
                )}
              >
                {col.id}
              </th>
            ))}
          </tr>
        </thead>
        <tbody>
          {rows.map((row) => (
            <SheetRow key={row} row={row} />
          ))}
        </tbody>
      </table>
      <EmbeddedImage />
      <div className="absolute right-[39px] bottom-[6px] left-11 h-5 rounded-full bg-black/37" />
      <div className="absolute top-[40%] right-[6px] bottom-1 w-5 rounded-full bg-black/37" />
    </main>
  )
}

/* ---------- Footer ---------- */

function SheetTabs() {
  return (
    <div className="flex h-[50px] items-start bg-linear-to-b from-[#e9e9e9] to-[#f0f0f0] to-30%">
      <button type="button" aria-label="Previous sheet" className="mt-[15px] ml-[30px]">
        <Icon w={14} h={20}><path d="M14 0v20L0 10z" fill="#b5b5b5" stroke="none" /></Icon>
      </button>
      <button type="button" aria-label="Next sheet" className="mt-[15px] ml-8">
        <Icon w={14} h={20}><path d="M0 0v20l14-10z" fill="#b5b5b5" stroke="none" /></Icon>
      </button>
      <a href="#sheet1" className="relative -mt-[2px] ml-[30px] flex h-[46px] w-[160px] items-center justify-center rounded-b-md border-2 border-t-0 border-[#c8c8c8] bg-white pt-[6px] text-2xl font-bold text-[#3f8452] [font-family:'Liberation_Sans',sans-serif]">
        Sheet1
      </a>
      <button type="button" aria-label="Add sheet" className="mt-3 ml-7">
        <Icon w={22} h={22}><path d="M1 11h20M11 1v20" stroke="#555" strokeWidth={3.500} /></Icon>
      </button>
      <div className="ml-[26px] h-[42px] w-[2px] bg-[#c8c8c8]" />
    </div>
  )
}

function StatusBar() {
  return (
    <footer className="flex h-[46px] items-center justify-between border-t-2 border-[#a0a0a0] bg-linear-to-b from-[#e3e3e3] to-[#d6d6d6] text-2xl text-[#555]">
      <div className="flex items-center pl-12">
        <span>Ready</span>
        <button type="button" className="ml-[38px] flex items-center gap-2">
          <Icon w={30} h={30}>
            <g stroke="#666">
              <circle cx="13" cy="4.500" r="3.500" />
              <path d="M9 8L4 5.500C1 5 0 8 2 9.500l6 3v6L4 27c0 3 3 3 4 1l5-8 2 3M17 8l5-2.500c3-.5 4 2.500 2 4l-6 3v4" />
              <path d="M17 18l12 11M29 18L17 29" />
            </g>
          </Icon>
          Accessibility: Investigate
        </button>
      </div>
      <div className="flex h-full items-center pr-14">
        <button type="button" aria-label="Normal view" className="flex h-full w-[74px] items-center justify-center bg-[#a6a6a6]">
          <Icon w={28} h={28}><path d="M2 2h24v24H2zM2 10h24M2 18h24M10 2v24M18 2v24" stroke="#fff" /></Icon>
        </button>
        <button type="button" aria-label="Page layout view" className="ml-5">
          <Icon w={28} h={28}>
            <path d="M1 2h26v24H1zM7 6h14v16H7zM10 10h8M10 14h8M10 18h8" stroke="#666" />
          </Icon>
        </button>
        <button type="button" aria-label="Page break view" className="ml-[43px]">
          <Icon w={28} h={28}>
            <path d="M1 2h26v24H1zM1 15h16V2M9 2v13" stroke="#666" />
          </Icon>
        </button>
        <button type="button" aria-label="Zoom out" className="ml-[38px]">
          <Icon w={16} h={16}><path d="M0 8h16" stroke="#666" strokeWidth={4} /></Icon>
        </button>
        <input
          type="range"
          aria-label="Zoom"
          min={10}
          max={190}
          defaultValue={91}
          className="ml-[14px] h-8 w-[200px] appearance-none bg-transparent [&::-webkit-slider-runnable-track]:h-2 [&::-webkit-slider-runnable-track]:rounded-full [&::-webkit-slider-runnable-track]:bg-[#9a9a9a] [&::-webkit-slider-thumb]:-mt-3 [&::-webkit-slider-thumb]:h-8 [&::-webkit-slider-thumb]:w-8 [&::-webkit-slider-thumb]:appearance-none [&::-webkit-slider-thumb]:rounded-full [&::-webkit-slider-thumb]:bg-white [&::-webkit-slider-thumb]:shadow"
        />
        <button type="button" aria-label="Zoom in" className="ml-[14px]">
          <Icon w={16} h={16}><path d="M0 8h16M8 0v16" stroke="#666" strokeWidth={4} /></Icon>
        </button>
        <span className="ml-[42px]">91%</span>
      </div>
    </footer>
  )
}

export default function App() {
  return (
    <div className="flex min-h-screen flex-col overflow-hidden bg-[#f5f5f5] [font-family:Inter,sans-serif]">
      <TitleBar />
      <TabRow />
      <Ribbon />
      <FormulaBar />
      <Sheet />
      <SheetTabs />
      <StatusBar />
    </div>
  )
}
